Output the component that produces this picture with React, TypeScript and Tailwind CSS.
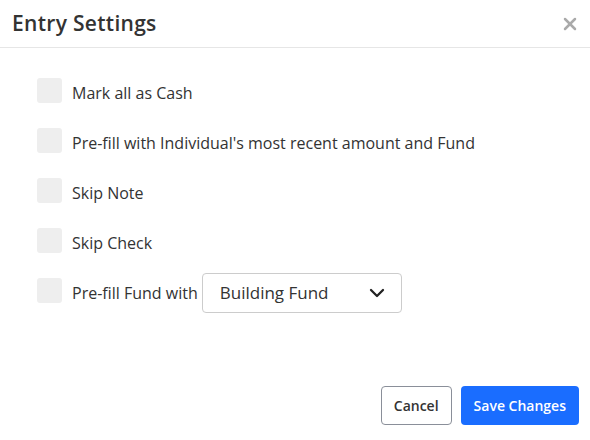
import { ChevronDown, X } from "lucide-react";

const options = [
  "Mark all as Cash",
  "Pre-fill with Individual's most recent amount and Fund",
  "Skip Note",
  "Skip Check",
];

function Box() {
  return <div className="w-[25px] h-[25px] rounded-[3px] bg-[#eeeeee] shrink-0" />;
}

export default function App() {
  return (
    <div
      className="w-[590px] h-[440px] bg-white flex flex-col text-[#333333]"
      style={{ fontFamily: '"Open Sans", sans-serif' }}
    >
      {/* Header */}
      <div className="h-[48px] flex items-center justify-between pl-[12px] pr-[10px] border-b border-[#e6e6e6]">
        <h1 className="text-[21px] font-semibold text-[#333333] tracking-[0.3px]">Entry Settings</h1>
        <X className="w-[20px] h-[20px] text-[#aaaaaa]" strokeWidth={3} />
      </div>

      {/* Body */}
      <div className="flex flex-col pl-[37px] pt-[17px]">
        {options.map((label) => (
          <label key={label} className="h-[50px] flex items-center gap-[10px]">
            <Box />
            <span className="text-[16px] mt-[5px]">{label}</span>
          </label>
        ))}
        <div className="h-[50px] flex items-center">
          <Box />
          <span className="text-[16px] mt-[5px] ml-[10px] mr-[4px]">Pre-fill Fund with</span>
          <div className="w-[200px] h-[40px] mt-[6px] border border-[#cccccc] rounded-[4px] flex items-center justify-between pl-[17px] pr-[12px]">
            <span className="text-[17px] text-[#333333]">Building Fund</span>
            <ChevronDown className="w-[24px] h-[24px] text-[#222222]" strokeWidth={2.3} />
          </div>
        </div>
      </div>

      {/* Footer */}
      <div className="mt-auto flex justify-end gap-[9px] pr-[11px] pb-[15px]">
        <button className="h-[39px] px-[12px] rounded-[4px] border border-[#8a8f99] bg-white text-[14px] font-semibold text-[#333333]">
          Cancel
        </button>
        <button className="h-[39px] px-[13px] rounded-[4px] bg-[#1a6dff] text-[14px] font-semibold text-white">
          Save Changes
        </button>
      </div>
    </div>
  );
}
